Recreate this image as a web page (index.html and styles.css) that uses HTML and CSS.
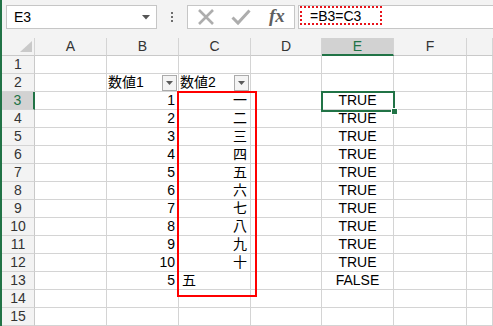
FILE: index.html
```html
<!DOCTYPE html>
<html lang="ja">
<head>
<meta charset="utf-8">
<link rel="stylesheet" href="styles.css">
</head>
<body>
<div class="app">
  <div class="fbar">
    <div class="namebox"><span class="nb-text">E3</span><svg class="nb-dd" width="8" height="5" viewBox="0 0 8 5"><path d="M0 0H8L4 4.5Z" fill="#555"/></svg></div>
    <div class="grip"><i></i><i></i><i></i></div>
    <div class="btns">
      <svg class="ic" width="18" height="18" viewBox="0 0 18 18"><path d="M2 2L16 16M16 2L2 16" stroke="#adadad" stroke-width="2.6" fill="none"/></svg>
      <svg class="ic" width="20" height="18" viewBox="0 0 20 18"><path d="M1.5 9.5L7 15L18.5 2.5" stroke="#adadad" stroke-width="3" fill="none"/></svg>
      <span class="fx">fx</span>
    </div>
    <div class="formula"><span class="ftext">=B3=C3</span><span class="marquee"></span></div>
  </div>
  <div class="sheet">
    <div class="grid">
      <div class="h corner"><svg width="12" height="11" viewBox="0 0 12 11"><path d="M12 0V11H0Z" fill="#c9c9c9"/></svg></div>
      <div class="h">A</div><div class="h">B</div><div class="h">C</div><div class="h">D</div><div class="h hsel">E</div><div class="h">F</div><div class="h"></div>

      <div class="rh">1</div><div class="c"></div><div class="c"></div><div class="c"></div><div class="c"></div><div class="c"></div><div class="c"></div><div class="c"></div>

      <div class="rh">2</div><div class="c"></div>
      <div class="c flt"><span>数値1</span><span class="fbtn"><svg width="7" height="4" viewBox="0 0 7 4"><path d="M0 0H7L3.5 4Z" fill="#5a5a5a"/></svg></span></div>
      <div class="c flt"><span>数値2</span><span class="fbtn"><svg width="7" height="4" viewBox="0 0 7 4"><path d="M0 0H7L3.5 4Z" fill="#5a5a5a"/></svg></span></div>
      <div class="c"></div><div class="c"></div><div class="c"></div><div class="c"></div>

      <div class="rh rsel">3</div><div class="c"></div><div class="c r">1</div><div class="c r">一</div><div class="c"></div><div class="c m">TRUE</div><div class="c"></div><div class="c"></div>
      <div class="rh">4</div><div class="c"></div><div class="c r">2</div><div class="c r">二</div><div class="c"></div><div class="c m">TRUE</div><div class="c"></div><div class="c"></div>
      <div class="rh">5</div><div class="c"></div><div class="c r">3</div><div class="c r">三</div><div class="c"></div><div class="c m">TRUE</div><div class="c"></div><div class="c"></div>
      <div class="rh">6</div><div class="c"></div><div class="c r">4</div><div class="c r">四</div><div class="c"></div><div class="c m">TRUE</div><div class="c"></div><div class="c"></div>
      <div class="rh">7</div><div class="c"></div><div class="c r">5</div><div class="c r">五</div><div class="c"></div><div class="c m">TRUE</div><div class="c"></div><div class="c"></div>
      <div class="rh">8</div><div class="c"></div><div class="c r">6</div><div class="c r">六</div><div class="c"></div><div class="c m">TRUE</div><div class="c"></div><div class="c"></div>
      <div class="rh">9</div><div class="c"></div><div class="c r">7</div><div class="c r">七</div><div class="c"></div><div class="c m">TRUE</div><div class="c"></div><div class="c"></div>
      <div class="rh">10</div><div class="c"></div><div class="c r">8</div><div class="c r">八</div><div class="c"></div><div class="c m">TRUE</div><div class="c"></div><div class="c"></div>
      <div class="rh">11</div><div class="c"></div><div class="c r">9</div><div class="c r">九</div><div class="c"></div><div class="c m">TRUE</div><div class="c"></div><div class="c"></div>
      <div class="rh">12</div><div class="c"></div><div class="c r">10</div><div class="c r">十</div><div class="c"></div><div class="c m">TRUE</div><div class="c"></div><div class="c"></div>
      <div class="rh">13</div><div class="c"></div><div class="c r">5</div><div class="c">五</div><div class="c"></div><div class="c m">FALSE</div><div class="c"></div><div class="c"></div>
      <div class="rh">14</div><div class="c"></div><div class="c"></div><div class="c"></div><div class="c"></div><div class="c"></div><div class="c"></div><div class="c"></div>
      <div class="rh">15</div><div class="c"></div><div class="c"></div><div class="c"></div><div class="c"></div><div class="c"></div><div class="c"></div><div class="c"></div>
    </div>
    <div class="redbox"></div>
    <div class="selbox"><span class="handle"></span></div>
  </div>
</div>
</body>
</html>
```
FILE: styles.css
```css
html, body {
  margin: 0;
  padding: 0;
  overflow: hidden;
}
body {
  font-family: "Liberation Sans", "Noto Sans CJK JP", sans-serif;
  font-size: 14px;
  color: #000;
  background: #fff;
}
.app {
  border-left: 2px solid #217346;
  height: 326px;
  box-sizing: border-box;
  background: #f3f3f3;
}
.fbar {
  height: 38px;
  box-sizing: border-box;
  padding: 5px 0 0 4px;
  display: flex;
  align-items: flex-start;
}
.namebox {
  width: 151px;
  height: 24px;
  box-sizing: border-box;
  background: #fff;
  border: 1px solid #c6c6c6;
  display: flex;
  align-items: center;
  justify-content: space-between;
  padding: 0 6px 0 7px;
}
.nb-text {
  font-size: 14px;
}
.grip {
  width: 30px;
  height: 24px;
  display: flex;
  flex-direction: column;
  align-items: center;
  justify-content: center;
  gap: 2px;
}
.grip i {
  display: block;
  width: 2px;
  height: 2px;
  background: #6d6d6d;
}
.btns {
  width: 108px;
  height: 24px;
  box-sizing: border-box;
  background: #fff;
  border: 1px solid #c6c6c6;
  display: flex;
  align-items: center;
  padding-left: 9px;
  gap: 0;
}
.btns .ic:first-child {
  margin-right: 16px;
}
.btns .ic:nth-child(2) {
  margin-right: 18px;
}
.fx {
  font-family: "Liberation Serif", serif;
  font-style: italic;
  font-weight: bold;
  font-size: 19px;
  color: #5f5f5f;
  line-height: 20px;
  margin-top: -2px;
}
.formula {
  position: relative;
  flex: 1;
  height: 24px;
  margin-left: 3px;
  margin-right: -2px;
  box-sizing: border-box;
  background: #fff;
  border: 1px solid #c6c6c6;
  padding-left: 11px;
  line-height: 21px;
}
.ftext {
  font-size: 14px;
}
.marquee {
  position: absolute;
  left: 1px;
  top: 0;
  width: 82px;
  height: 19px;
  box-sizing: border-box;
  border: 2px dotted #e8131a;
}
.sheet {
  position: relative;
}
.grid {
  display: grid;
  grid-template-columns: 33px 72px 72px 72px 71px 72px 73px 26px;
  grid-template-rows: repeat(16, 18px);
  background: #fff;
}
.h, .rh, .c {
  box-sizing: border-box;
  border-right: 1px solid #d4d4d4;
  border-bottom: 1px solid #d4d4d4;
  white-space: nowrap;
  overflow: hidden;
  line-height: 17px;
}
.h {
  background: #f3f3f3;
  text-align: center;
  color: #333;
  border-bottom-color: #c9c9c9;
}
.corner {
  display: flex;
  align-items: flex-end;
  justify-content: flex-end;
  padding: 0 2px 3px 0;
}
.corner svg {
  display: block;
}
.hsel {
  background: #d2d2d2;
  color: #217346;
  border-bottom: 2px solid #217346;
}
.rh {
  background: #f3f3f3;
  text-align: center;
  color: #333;
  border-right-color: #c9c9c9;
}
.rsel {
  background: #d2d2d2;
  color: #217346;
  border-right: 2px solid #217346;
}
.c {
  padding: 0 3px;
}
.r {
  text-align: right;
}
.m {
  text-align: center;
}
.flt {
  display: flex;
  align-items: center;
  justify-content: space-between;
  padding: 0 1px 0 1px;
}
.fbtn {
  width: 15px;
  height: 16px;
  box-sizing: border-box;
  border: 1px solid #ababab;
  background: #f4f4f4;
  display: flex;
  align-items: center;
  justify-content: center;
}
.fbtn svg {
  display: block;
}
.redbox {
  position: absolute;
  left: 175px;
  top: 53px;
  width: 80px;
  height: 206px;
  box-sizing: border-box;
  border: 2px solid #ff0000;
}
.selbox {
  position: absolute;
  left: 319px;
  top: 53px;
  width: 74px;
  height: 21px;
  box-sizing: border-box;
  border: 2px solid #217346;
}
.handle {
  position: absolute;
  right: -5px;
  bottom: -5px;
  width: 7px;
  height: 7px;
  box-sizing: border-box;
  background: #217346;
  border: 1px solid #fff;
}
```
